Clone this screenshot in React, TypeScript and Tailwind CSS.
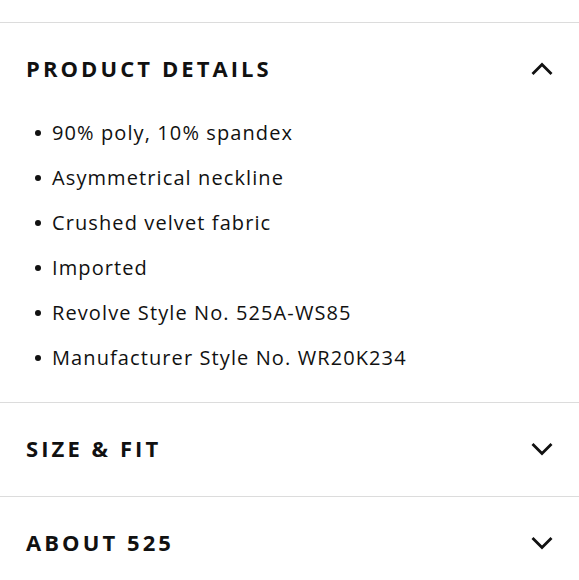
import React from "react";

const Chevron = ({ up }: { up?: boolean }) => (
  <svg width="24" height="16" viewBox="0 0 24 16" fill="none" className="block">
    {up ? (
      <path d="M2.5 13 L12 3.5 L21.5 13" stroke="#111" strokeWidth="2.8" strokeLinecap="butt" strokeLinejoin="miter" />
    ) : (
      <path d="M2.5 3 L12 12.5 L21.5 3" stroke="#111" strokeWidth="2.8" strokeLinecap="butt" strokeLinejoin="miter" />
    )}
  </svg>
);

const items = [
  "90% poly, 10% spandex",
  "Asymmetrical neckline",
  "Crushed velvet fabric",
  "Imported",
  "Revolve Style No. 525A-WS85",
  "Manufacturer Style No. WR20K234",
];

const Header = ({ title, up }: { title: string; up?: boolean }) => (
  <div className="flex h-[93px] items-center justify-between pb-[2px] pl-[26px] pr-[25px]">
    <span className="text-[22px] font-bold uppercase tracking-[0.14em] text-[#111] [font-family:'Open_Sans',sans-serif]">
      {title}
    </span>
    <Chevron up={up} />
  </div>
);

export default function App() {
  return (
    <div className="min-h-[580px] w-[579px] bg-white pt-[22px] [font-family:'Open_Sans',sans-serif]">
      <section className="border-t border-[#dcdcdc]">
        <Header title="Product Details" up />
        <ul className="flex flex-col gap-[17px] pb-[30px] pt-[3px]">
          {items.map((t) => (
            <li key={t} className="flex h-[28px] items-center pl-[35px] text-[20px] tracking-[0.055em] text-[#111]">
              <span className="mr-[11px] h-[6px] w-[6px] shrink-0 rounded-full bg-[#111]" />
              {t}
            </li>
          ))}
        </ul>
      </section>
      <section className="border-t border-[#dcdcdc]">
        <Header title="Size & Fit" />
      </section>
      <section className="border-t border-[#dcdcdc]">
        <Header title="About 525" />
      </section>
    </div>
  );
}
